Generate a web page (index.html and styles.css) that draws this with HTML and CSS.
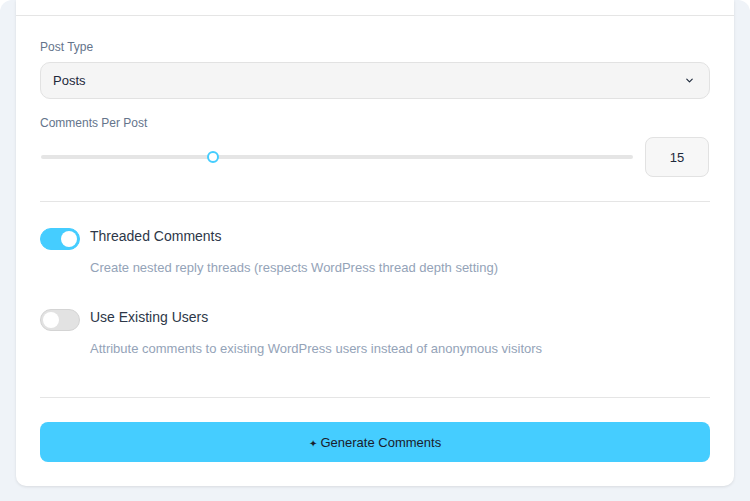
FILE: index.html
```html
<!DOCTYPE html>
<html>
<head>
  <title>Generate Comments</title>
  <link rel="stylesheet" href="styles.css">
</head>
<body>
  <div class="shell">
    <div class="card">
      <div class="card-header"></div>

      <div class="card-body">
        <div class="field">
          <label class="field-label">Post Type</label>
          <div class="select">
            <span>Posts</span>
            <svg class="chevron" width="11" height="11" viewBox="0 0 24 24" fill="none" stroke="#1e293b" stroke-width="2.5" stroke-linecap="round" stroke-linejoin="round"><path d="M6 9l6 6 6-6"/></svg>
          </div>
        </div>

        <div class="field">
          <label class="field-label">Comments Per Post</label>
          <div class="slider-row">
            <div class="slider">
              <div class="slider-track"></div>
              <div class="slider-thumb" style="left: 29%;"></div>
            </div>
            <div class="number-box">15</div>
          </div>
        </div>

        <div class="divider"></div>

        <div class="options">
          <div class="option">
            <div class="toggle on"><span class="knob"></span></div>
            <div class="option-text">
              <div class="option-title">Threaded Comments</div>
              <div class="option-desc">Create nested reply threads (respects WordPress thread depth setting)</div>
            </div>
          </div>

          <div class="option">
            <div class="toggle"><span class="knob"></span></div>
            <div class="option-text">
              <div class="option-title">Use Existing Users</div>
              <div class="option-desc">Attribute comments to existing WordPress users instead of anonymous visitors</div>
            </div>
          </div>
        </div>

        <div class="divider"></div>

        <button class="generate-button"><span class="sparkle">✦</span> Generate Comments</button>
      </div>
    </div>
  </div>
</body>
</html>
```

FILE: styles.css
```css
body {
  margin: 0;
  background-color: #ffffff;
  font-family: "Liberation Sans", Arial, sans-serif;
}

.shell {
  background-color: #eff3f8;
  border-radius: 12px 12px 0 0;
  padding: 0 16px 15px 16px;
}

.card {
  background-color: #fff;
  border-radius: 0 0 10px 10px;
  box-shadow: 0 1px 3px rgba(0, 0, 0, 0.1);
}

.card-header {
  height: 15px;
  border-bottom: 1px solid #e5e5e5;
}

.card-body {
  padding: 24px;
}

.field {
  display: flex;
  flex-direction: column;
  gap: 8px;
  margin-bottom: 17px;
}

.field-label {
  font-size: 12px;
  line-height: 14px;
  color: #64748b;
}

.select {
  display: flex;
  align-items: center;
  justify-content: space-between;
  height: 35px;
  padding: 0 14px 0 12px;
  background-color: #f5f5f5;
  border: 1px solid #e2e2e2;
  border-radius: 10px;
  font-size: 13px;
  color: #1e293b;
}

.slider-row {
  display: flex;
  align-items: center;
  gap: 12px;
  margin-top: -1px;
  padding-right: 1px;
}

.slider {
  position: relative;
  flex: 1;
  height: 14px;
}

.slider-track {
  position: absolute;
  left: 1px;
  right: 0;
  top: 5px;
  height: 4px;
  border-radius: 2px;
  background-color: #e5e5e5;
}

.slider-thumb {
  position: absolute;
  top: 1px;
  width: 8px;
  height: 8px;
  margin-left: -5px;
  border: 2px solid #45cdfe;
  border-radius: 50%;
  background-color: #fff;
}

.number-box {
  width: 62px;
  height: 38px;
  display: flex;
  align-items: center;
  justify-content: center;
  background-color: #f7f7f7;
  border: 1px solid #e2e2e2;
  border-radius: 8px;
  font-size: 13px;
  color: #1e293b;
}

.divider {
  height: 1px;
  background-color: #e5e5e5;
  margin-top: 24px;
}

.options {
  display: flex;
  flex-direction: column;
  gap: 33px;
  padding: 26px 0 16px 0;
}

.option {
  display: flex;
  gap: 10px;
}

.toggle {
  position: relative;
  flex-shrink: 0;
  width: 38px;
  height: 20px;
  border: 1px solid #d4d4d4;
  border-radius: 11px;
  background-color: #e2e2e2;
}

.toggle .knob {
  position: absolute;
  top: 2px;
  left: 2px;
  width: 16px;
  height: 16px;
  border-radius: 50%;
  background-color: #fff;
}

.toggle.on {
  background-color: #45cdff;
  border-color: #45cdff;
}

.toggle.on .knob {
  left: 20px;
}

.option-title {
  font-size: 14px;
  line-height: 17px;
  color: #2d3748;
}

.option-desc {
  margin-top: 15px;
  font-size: 13px;
  line-height: 16px;
  color: #94a3b8;
}

.generate-button {
  display: block;
  width: 100%;
  height: 40px;
  margin-top: 24px;
  background-color: #45cdff;
  border: none;
  border-radius: 8px;
  font-family: "Liberation Sans", Arial, sans-serif;
  font-size: 13px;
  color: #1a202c;
  cursor: pointer;
}

.sparkle {
  font-size: 10px;
}
```
